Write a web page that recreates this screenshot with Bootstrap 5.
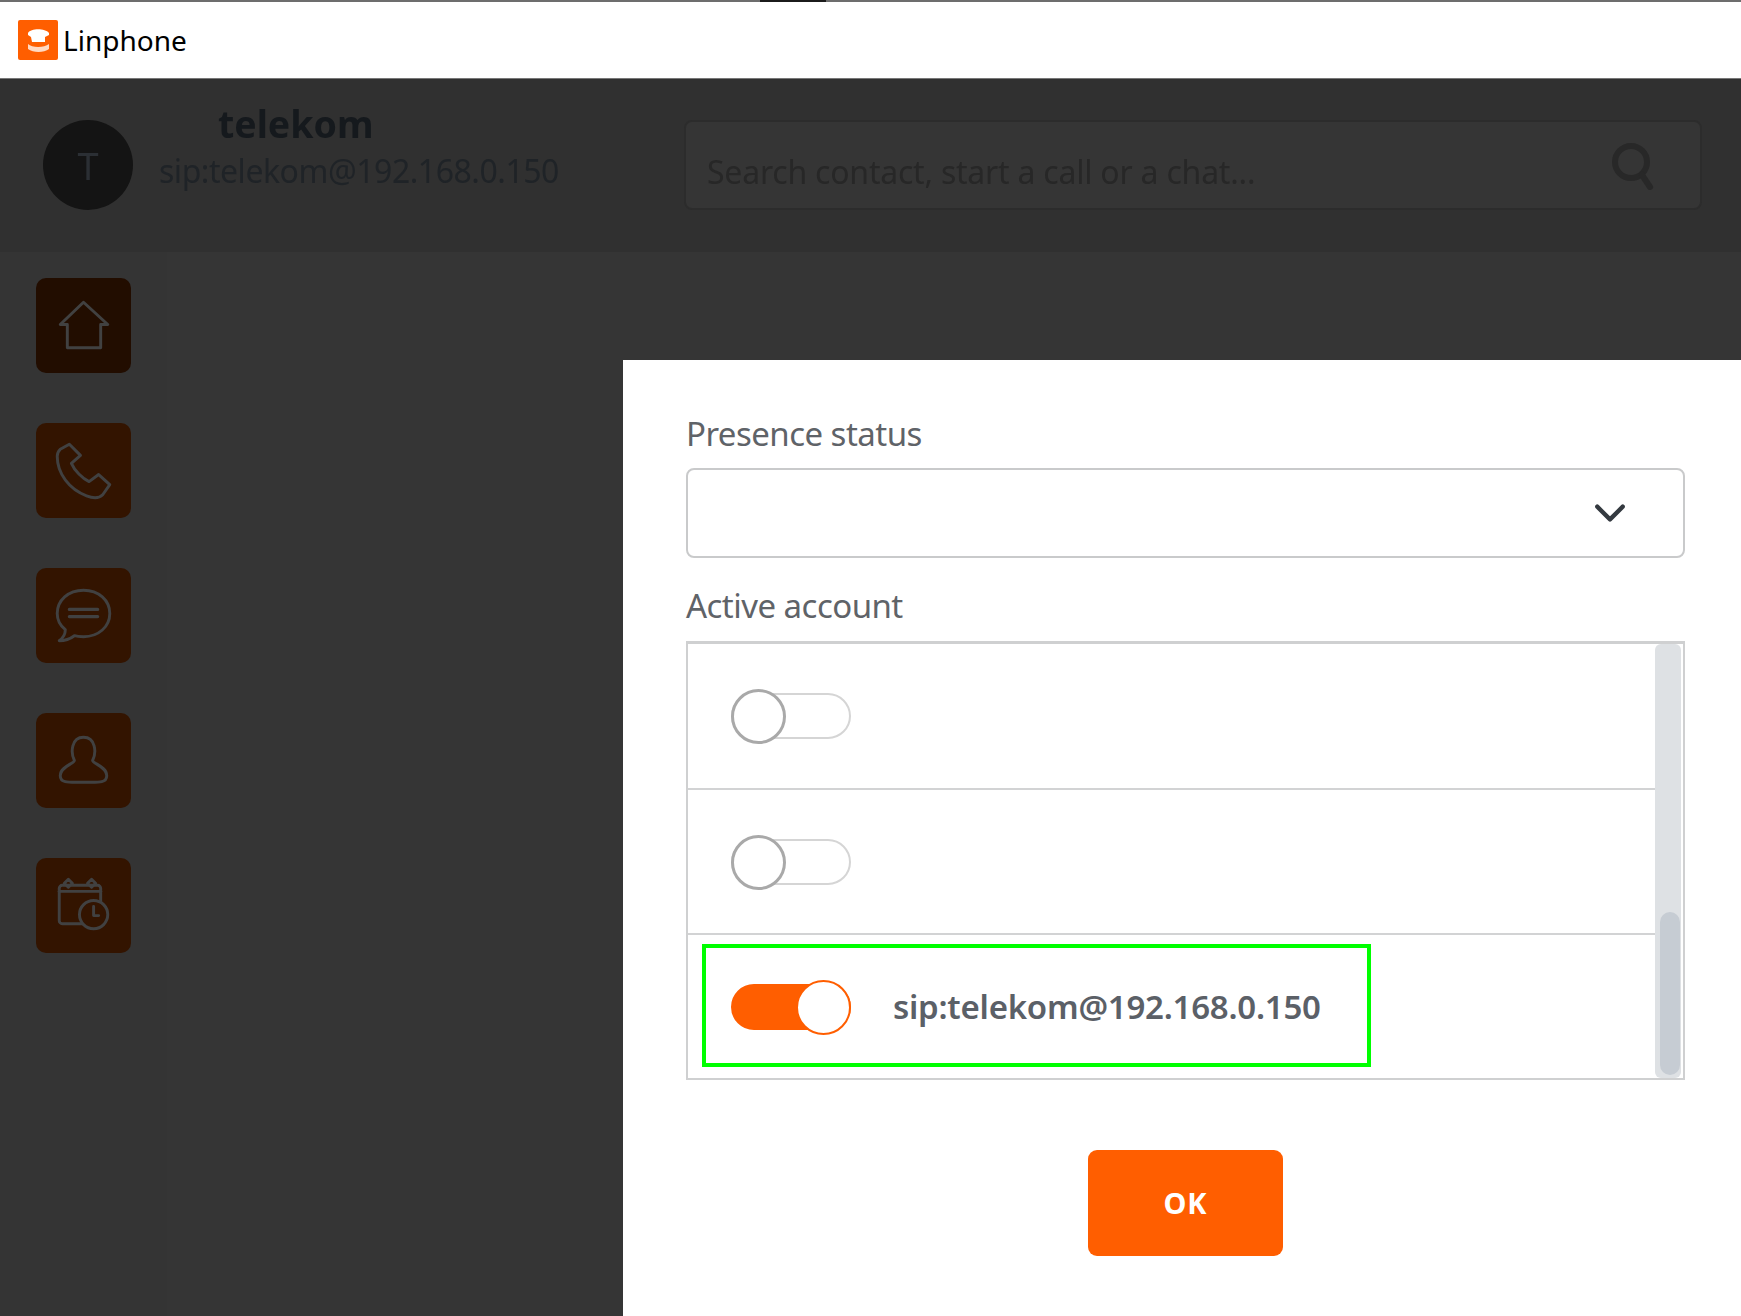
<!DOCTYPE html>
<html lang="en">
<head>
<meta charset="utf-8">
<title>Linphone</title>
<link href="https://cdn.jsdelivr.net/npm/bootstrap@5.3.0/dist/css/bootstrap.min.css" rel="stylesheet">
<style>
html,body{height:1316px;overflow:hidden;background:#353535;font-family:"Noto Sans",sans-serif}
.app-shell{position:relative;height:1316px;overflow:hidden}
.top-strip{height:2px;background:#6d6d6d}
.top-strip-gap{width:760px}
.top-strip-dark{width:66px;background:#1b1b1b}
.title-bar{height:77px;background:#fff;border-bottom:1px solid #777;padding-left:18px;gap:5px}
.app-logo{width:40px;height:40px;display:block}
.app-name{font-size:28px;color:#000;line-height:1}
.dim-layer{filter:blur(.7px)}
.head-bar{height:173px;background:#303030;padding:41px 40px 0 43px}
.avatar-dot{width:90px;height:90px;background:#141414;color:#2b2f34;font-size:38px}
.who-col{width:525px;margin-left:26px;margin-top:-19px}
.who-name{font-size:37.5px;font-weight:700;color:#15191d;padding-left:59px;line-height:46px}
.who-sip{font-size:32px;color:#1f2327;line-height:44px;letter-spacing:-.47px;margin-top:2px}
.search-box{width:1018px;height:90px;background:#353535;border:2px solid #2c2c2c;border-radius:8px;padding:0 44px 0 21px}
.search-hint{font-size:32px;color:#272727;letter-spacing:-.22px;margin-top:14px}
.search-glass{margin-top:2px}
.work-area{height:1064px}
.side-col{width:167px;height:1064px;background:#343434;padding:26px 0 0 36px;gap:50px}
.side-btn{width:95px;height:95px;border-radius:10px;background:#331400}
.side-btn.is-current{background:#220d00}
.side-btn svg{width:95px;height:95px;fill:none;stroke:#414141;stroke-width:2.9;stroke-linejoin:round;stroke-linecap:round}
.dialog-pane{position:absolute;left:623px;top:360px;right:0;bottom:0;background:#fff;padding:0 56px 0 63px}
.field-label{font-size:33px;line-height:40px;color:#5f6368;letter-spacing:-.53px;margin:0}
.first-label{padding-top:54px}
.second-label{padding-top:28px}
.status-select.form-select{height:90px;margin-top:14px;border:2px solid #c9cacb;border-radius:8px;background-size:42px 34px;background-position:right 52px center}
.account-box{position:relative;margin-top:15px;height:439px;border:2px solid #cfd0d1;border-top-width:3px;border-radius:0;overflow:hidden}
.account-row.list-group-item{height:145px;padding:0 0 0 43px;border:0;border-bottom:2px solid #d2d3d4;border-radius:0;margin-right:28px;gap:42px}
.account-row.list-group-item:first-child{height:146px}
.account-row.list-group-item:last-child{height:144px;border-bottom:0}
.toggle-track{position:relative;display:block;width:120px;height:46px;border:2px solid #d5d5d5;border-radius:23px;background:#fff}
.toggle-knob{position:absolute;left:-2px;top:-6px;width:55px;height:55px;border:3px solid #a9a9a9;border-radius:50%;background:#fff}
.toggle-track.is-on{background:#ff5e00;border-color:#ff5e00}
.toggle-track.is-on .toggle-knob{left:63px;border:2px solid #ff5e00}
.account-sip{font-size:33px;font-weight:600;color:#5b6067;letter-spacing:-.25px}
.scroll-rail{position:absolute;right:2px;top:0;bottom:0;width:26px;background:#dee1e4;border-radius:6px;display:flex;align-items:flex-end}
.scroll-grip{width:20px;height:163px;margin:0 1px 3px 5px;background:#c6ccd3;border-radius:10px}
.focus-frame{position:absolute;left:14px;top:300px;width:669px;height:123px;border:4px solid #00ff00;pointer-events:none}
.ok-btn.btn{width:195px;height:106px;margin-top:70px;background:#ff5e00;border:0;border-radius:9px;color:#fff;font-size:29px;font-weight:700;letter-spacing:1px}
</style>
</head>
<body>
<div class="app-shell">
  <div class="top-strip d-flex"><div class="top-strip-gap"></div><div class="top-strip-dark"></div></div>
  <div class="title-bar d-flex align-items-center">
    <svg class="app-logo" viewBox="0 0 40 40" aria-label="Linphone logo">
      <rect width="40" height="40" rx="2" fill="#ff5e00"/>
      <path d="M10 13 C13 8 27 8 31 13 L31 15 L27 17 L27 22 L14 22 L13 17 L10 15Z" fill="#fff"/>
      <path d="M10 24 C14 28 26 28 31 24 L31 29 C26 33 15 33 10 29 Z" fill="#ffd9c2"/>
    </svg>
    <span class="app-name">Linphone</span>
  </div>
  <div class="dim-layer">
    <div class="head-bar d-flex align-items-start">
      <div class="avatar-dot rounded-circle d-flex align-items-center justify-content-center flex-shrink-0">T</div>
      <div class="who-col flex-shrink-0">
        <div class="who-name">telekom</div>
        <div class="who-sip">sip:telekom@192.168.0.150</div>
      </div>
      <div class="search-box d-flex align-items-center justify-content-between flex-shrink-0">
        <span class="search-hint">Search contact, start a call or a chat...</span>
        <svg class="search-glass" width="46" height="48" viewBox="0 0 46 48" fill="none" stroke="#282828" stroke-width="6" stroke-linecap="round"><circle cx="21" cy="20" r="16"/><path d="M32 33l8 12"/></svg>
      </div>
    </div>
    <div class="work-area d-flex">
      <div class="side-col d-flex flex-column">
        <div class="side-btn is-current">
          <svg viewBox="0 0 94 94"><path d="M47 24 L71 46 H64 V69 H31 V46 H24 Z"/></svg>
        </div>
        <div class="side-btn">
          <svg viewBox="0 0 94 94"><path d="M33 21 L44 32 L35 40 C38 47 46 55 52.5 58 L62 51 L73 61 L66 71 C62 75 55 74 50 72 C33 66 21 50 21 33 C21 30 22 28 24 26 Z"/></svg>
        </div>
        <div class="side-btn">
          <svg viewBox="0 0 94 94"><path d="M47 22 C62 22 73 32 73 45 C73 58 62 68 47 68 C44 68 41 68 38 67 C34 70 29 72 23 72 C27 69 29 65 29 61 C24 57 21 51 21 45 C21 32 32 22 47 22Z"/><path d="M33 41 H61 M33 48 H61" stroke-width="3.2"/></svg>
        </div>
        <div class="side-btn">
          <svg viewBox="0 0 94 94"><path d="M38 47 C34 39 35 24 47 24 C59 24 60 39 56 47 C56 50 70 53 70 62 C70 70 60 68.5 47 68.5 C34 68.5 24 70 24 62 C24 53 38 50 38 47Z"/></svg>
        </div>
        <div class="side-btn">
          <svg viewBox="0 0 94 94"><rect x="23" y="27" width="41" height="38" rx="3"/><path d="M23 33 H64"/><path d="M32 21 L36 25 L32 29 L28 25Z M55 21 L59 25 L55 29 L51 25Z"/><circle cx="57" cy="56" r="14" fill="#331400"/><path d="M57 48 V57 H62"/></svg>
        </div>
      </div>
    </div>
  </div>
  <div class="dialog-pane">
    <p class="field-label first-label">Presence status</p>
    <select class="form-select status-select" aria-label="Presence status"><option></option></select>
    <p class="field-label second-label">Active account</p>
    <div class="account-box">
      <div class="list-group list-group-flush">
        <div class="list-group-item account-row d-flex align-items-center"><span class="toggle-track"><span class="toggle-knob"></span></span></div>
        <div class="list-group-item account-row d-flex align-items-center"><span class="toggle-track"><span class="toggle-knob"></span></span></div>
        <div class="list-group-item account-row d-flex align-items-center"><span class="toggle-track is-on"><span class="toggle-knob"></span></span><span class="account-sip">sip:telekom@192.168.0.150</span></div>
      </div>
      <div class="scroll-rail"><div class="scroll-grip"></div></div>
      <div class="focus-frame"></div>
    </div>
    <div class="d-flex justify-content-center"><button type="button" class="btn ok-btn">OK</button></div>
  </div>
</div>
<script src="https://cdn.jsdelivr.net/npm/bootstrap@5.3.0/dist/js/bootstrap.bundle.min.js"></script>
</body>
</html>
